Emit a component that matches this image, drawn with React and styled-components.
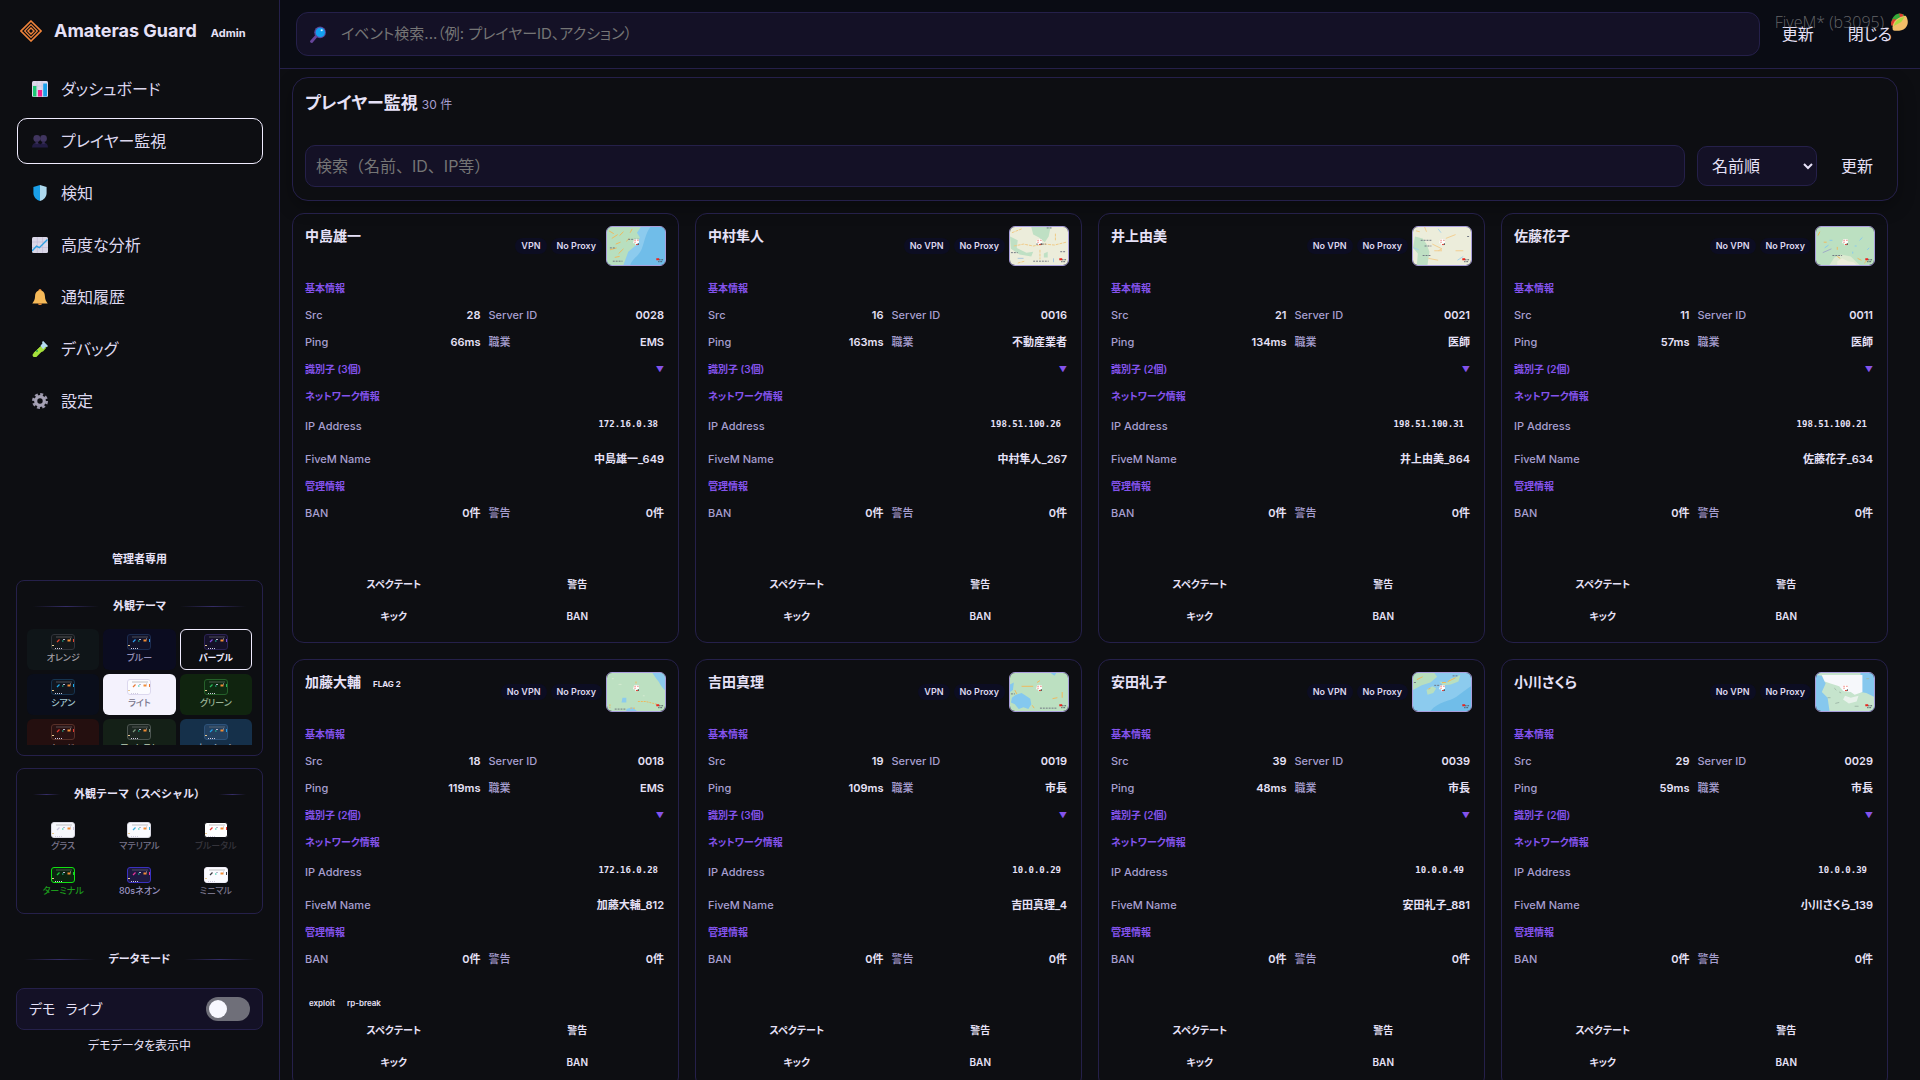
import styled, { createGlobalStyle } from "styled-components";

const GlobalStyle = createGlobalStyle`
  * {
    box-sizing: border-box;
  }
  body {
    margin: 0;
    background: #0d0e12;
    color: #e6e1f7;
    font-family: Inter, "Noto Sans CJK JP", sans-serif;
    font-size: 16px;
    line-height: 20px;
    font-feature-settings: "palt";
    overflow: hidden;
  }
  button, input, select {
    font: inherit;
    font-feature-settings: inherit;
    color: inherit;
  }
  button {
    background: none;
    border: 0;
    padding: 0;
    cursor: pointer;
  }
`;

const Layout = styled.div`
  display: flex;
  height: 100vh;
`;

const Sidebar = styled.aside`
  width: 280px;
  flex-shrink: 0;
  display: flex;
  flex-direction: column;
  padding: 0 16px 24px;
  border-right: 1px solid #25204a;
`;

const Brand = styled.div`
  display: flex;
  align-items: center;
  height: 62px;
  padding: 0 4px;
`;

const BrandName = styled.h1`
  margin: 0 14px 0 12px;
  font-size: 18px;
  font-weight: 700;
`;

const BrandRole = styled.span`
  font-size: 11px;
  font-weight: 700;
  padding-top: 4px;
`;

const Nav = styled.nav`
  display: flex;
  flex-direction: column;
  gap: 6px;
  padding: 4px 0 0 1px;
`;

const NavItem = styled.a`
  display: flex;
  align-items: center;
  gap: 13px;
  height: 46px;
  padding: 0 14px;
  border: 1px solid ${(props) => (props.$active ? "#f0ecff" : "transparent")};
  border-radius: 10px;
  color: #dcd7ee;
  text-decoration: none;
`;

const Bottom = styled.div`
  margin-top: auto;
`;

const AdminOnly = styled.h2`
  margin: 0 0 12px;
  text-align: center;
  font-size: 11px;
  font-weight: 700;
  line-height: 18px;
`;

const ThemeBox = styled.section`
  margin-bottom: 12px;
  padding: 16px 10px 10px;
  border: 1px solid #25204a;
  border-radius: 8px;
`;

const RuleTitle = styled.h3`
  display: flex;
  align-items: center;
  gap: 14px;
  margin: 0 6px 14px;
  font-size: 11px;
  font-weight: 700;
  line-height: 18px;
  font-feature-settings: ${(props) => (props.$fullWidth ? "normal" : "inherit")};

  &::before,
  &::after {
    content: "";
    flex: 1;
    height: 1px;
    background: linear-gradient(90deg, transparent, #352d68, transparent);
  }
`;

const ThemeGrid = styled.div`
  display: grid;
  grid-template-columns: repeat(3, 1fr);
  grid-auto-rows: 41px;
  gap: 4px;
  max-height: 116px;
  overflow: hidden;
`;

const ThemeButton = styled.button`
  display: flex;
  flex-direction: column;
  align-items: center;
  gap: 1px;
  padding-top: 4px;
  border: 1px solid ${(props) => (props.$active ? "#f0ecff" : "transparent")};
  border-radius: 6px;
  background: ${(props) => props.$bg || "none"};
  background-clip: border-box;
  color: ${(props) => props.$color};
  font-size: 9px;
  font-weight: ${(props) => (props.$active ? 700 : 500)};
  line-height: 14px;
`;

const ModeTitle = styled(RuleTitle)`
  margin: 36px 8px 20px;
`;

const ModeSwitch = styled.label`
  display: flex;
  align-items: center;
  gap: 10px;
  height: 42px;
  padding: 0 12px;
  border: 1px solid #25204a;
  border-radius: 8px;
  background: #141126;
  font-size: 14px;
`;

const Toggle = styled.input`
  appearance: none;
  width: 44px;
  height: 24px;
  margin: 0 0 0 auto;
  padding: 3px;
  border-radius: 12px;
  background: #6f6f79;
  cursor: pointer;

  &::before {
    content: "";
    display: block;
    width: 18px;
    height: 18px;
    border-radius: 50%;
    background: #f8f8ff;
  }
  &:checked::before {
    margin-left: auto;
  }
`;

const ModeNote = styled.p`
  margin: 6px 0 0;
  text-align: center;
  font-size: 12px;
`;

const Content = styled.div`
  flex: 1;
  min-width: 0;
  display: flex;
  flex-direction: column;
`;

const Topbar = styled.header`
  display: flex;
  align-items: center;
  gap: 10px;
  height: 69px;
  flex-shrink: 0;
  padding: 0 16px;
  border-bottom: 1px solid #25204a;
  background: #0a0c14;
`;

const SearchBox = styled.label`
  flex: 1;
  display: flex;
  align-items: center;
  gap: 14px;
  height: 44px;
  padding: 0 13px;
  border: 1px solid #25204a;
  border-radius: 12px;
  background: #141126;
`;

const SearchInput = styled.input`
  flex: 1;
  min-width: 0;
  padding: 0;
  border: 0;
  outline: 0;
  background: none;
  font-size: 15px;

  &::placeholder {
    color: #757575;
  }
`;

const TextButton = styled.button`
  height: 40px;
  padding: 0 12px;
  color: #e6e1f7;
  white-space: nowrap;
`;

const Main = styled.main`
  flex: 1;
  min-height: 0;
  overflow: hidden;
  padding: 8px 22px 0 12px;
`;

const Panel = styled.section`
  padding: 15px 12px 13px;
  border: 1px solid #25204a;
  border-radius: 16px;
  box-shadow: 0 6px 18px rgba(0, 0, 0, 0.3);
`;

const PanelTitle = styled.h2`
  margin: 0 0 30px;
  font-size: 17px;
  font-weight: 700;
`;

const Count = styled.span`
  margin-left: 4px;
  color: #a79fd0;
  font-size: 12px;
  font-weight: 400;
`;

const Filters = styled.div`
  display: flex;
  align-items: center;
  gap: 12px;
`;

const FilterInput = styled(SearchInput)`
  height: 42px;
  padding: 0 10px;
  border: 1px solid #25204a;
  border-radius: 10px;
  background: #141126;
  font-size: 16px;
  font-feature-settings: normal;
`;

const SortSelect = styled.select`
  width: 120px;
  height: 40px;
  padding: 0 10px;
  border: 1px solid #25204a;
  border-radius: 10px;
  background: #141126;
`;

const CardGrid = styled.div`
  display: grid;
  grid-template-columns: repeat(4, 1fr);
  gap: 16px;
  margin: 12px 10px 0 0;
`;

const Card = styled.article`
  padding: 12px;
  border: 1px solid #25204a;
  border-radius: 12px;
`;

const CardHead = styled.header`
  display: flex;
  align-items: center;
  gap: 4px;
  height: 40px;
  margin-bottom: 12px;
`;

const PlayerName = styled.h3`
  align-self: flex-start;
  margin: 0 auto 0 0;
  font-size: 14px;
  font-weight: 700;
  line-height: 20px;
`;

const Flag = styled.span`
  margin-left: 12px;
  font-size: 8px;
`;

const Pill = styled.span`
  padding: 0 6px;
  border-radius: 8px;
  background: #0c0d22;
  color: #dcd7ee;
  font-size: 9px;
  font-weight: 600;
  line-height: 16px;
`;

const MapThumb = styled.svg`
  width: 60px;
  height: 40px;
  border: 1px solid #a99edb;
  border-radius: 6px;
`;

const Info = styled.div`
  display: grid;
  grid-template-columns: 1fr 1fr;
  gap: 6px 8px;
  padding-right: 2px;
`;

const SectionTitle = styled.h4`
  grid-column: 1 / -1;
  margin: 0;
  color: #8453ec;
  font-size: 10px;
  font-weight: 600;
  line-height: 21px;
`;

const SectionToggle = styled.button`
  grid-column: 1 / -1;
  display: flex;
  justify-content: space-between;
  color: #8453ec;
  font-size: 10px;
  font-weight: 600;
  line-height: 21px;
`;

const Caret = styled.span`
  font-size: 8px;
`;

const Field = styled.div`
  grid-column: ${(props) => (props.$wide ? "1 / -1" : "auto")};
  display: flex;
  justify-content: space-between;
  font-size: 11px;
  line-height: 21px;
`;

const AddressField = styled(Field)`
  align-items: center;
  height: 30px;
  padding-bottom: 3px;
`;

const FieldName = styled.span`
  color: #a79fd0;
  font-weight: 500;
`;

const FieldValue = styled.span`
  font-weight: 600;
`;

const Address = styled.code`
  padding: 0 6px 4px;
  font-family: "DejaVu Sans Mono", monospace;
  font-size: 9px;
  font-weight: 700;
`;

const Tags = styled.div`
  display: flex;
  gap: 12px;
  height: 18px;
  margin: 24px 0 4px;
  padding: 0 4px;
  font-size: 8px;
  font-weight: 600;
  line-height: 18px;
`;

const Actions = styled.div`
  display: grid;
  grid-template-columns: 1fr 1fr;
  gap: 4px 6px;
`;

const ActionButton = styled.button`
  height: 28px;
  font-size: 10px;
  font-weight: 600;
`;

// build label of the game client, drawn over everything
const Watermark = styled.div`
  position: absolute;
  top: 12px;
  right: 12px;
  display: flex;
  align-items: center;
  gap: 6px;
  color: rgba(160, 160, 160, 0.6);
  font-family: "Open Sans", sans-serif;
  font-weight: 300;
  pointer-events: none;
`;

const icons = {
  chart: (
    <>
      <rect width="16" height="16" rx="1.5" fill="#dcd8ea" />
      <path d="M0 5h16M0 10h16M5 0v16M10 0v16" stroke="#c3bcd8" strokeWidth="0.5" />
      <path d="M1 5h3.4v10.5H1z" fill="#1bc873" />
      <path d="M6 9h4v6.5H6z" fill="#f3228c" />
      <path d="M11.2 2.500h3.800v13h-3.800z" fill="#1aa0ea" />
    </>
  ),
  people: (
    <>
      <circle cx="4.800" cy="5.500" r="3.400" fill="#40355f" />
      <circle cx="11.500" cy="5.500" r="3.400" fill="#40355f" />
      <path d="M0 14.500c0-3 1.800-4.700 4.500-4.700s3.500 1 3.700 2c.3-1 1.300-2 3.500-2 2.700 0 4.300 1.700 4.300 4.700z" fill="#221c42" />
      <path d="M3.500 8h2.600v3H3.500zM10.200 8h2.600v3h-2.600z" fill="#352b55" />
    </>
  ),
  shield: (
    <>
      <path d="M8 0L1.400 2v6c0 4 3 7 6.600 8z" fill="#1a9fe8" />
      <path d="M8 0l6.600 2v6c0 4-3 7-6.600 8z" fill="#add9ee" />
    </>
  ),
  trend: (
    <>
      <rect width="16" height="16" rx="1.500" fill="#dad7e8" />
      <path d="M0 5h16M0 10.500h16M5.300 0v16M10.600 0v16" stroke="#bdb7d2" strokeWidth="0.600" />
      <path d="M0 14l4.500-4.800 2.800 1.500L15.500 2.500" fill="none" stroke="#2b9fe0" strokeWidth="1.400" />
    </>
  ),
  bell: (
    <>
      <circle cx="8" cy="1.500" r="1.500" fill="#ee8b35" />
      <path d="M8 1.500c-3.500 0-4.800 2.600-4.900 5.500C3 10.500 2 12 .3 14.500h15.400C14 12 13 10.500 12.900 7 12.800 4.100 11.500 1.500 8 1.500z" fill="#f5b958" />
      <path d="M6 14.500h4a2 1.500 0 0 1-4 0z" fill="#ee8b35" />
    </>
  ),
  tube: (
    <>
      <path d="M3 14.200L11.500 5.700" stroke="#a5e03b" strokeWidth="4.600" strokeLinecap="round" />
      <path d="M1.500 12l6.500-6 6.500.5-3.500 4z" fill="#a5e03b" />
      <path d="M8.500 4.800l2-2.500L10 1l1.200-1L16 5l-1 1-1.500-.3-2.400 2.500z" fill="#b5dcf0" />
      <circle cx="5" cy="10" r="1" fill="#2da34a" />
    </>
  ),
  gear: (
    <>
      <circle cx="8" cy="8" r="6.600" fill="none" stroke="#9c98ac" strokeWidth="2.800" strokeDasharray="2.900 2.280" />
      <circle cx="8" cy="8" r="4.300" fill="none" stroke="#a5a1b4" strokeWidth="3.200" />
    </>
  ),
  magnifier: (
    <>
      <path d="M1.500 14.500l4-4.500" stroke="#67459a" strokeWidth="2.800" strokeLinecap="round" />
      <circle cx="9.500" cy="6" r="5.500" fill="#5a4a9c" />
      <circle cx="9.700" cy="6" r="4.400" fill="#12a0ef" />
      <circle cx="11" cy="4" r="1" fill="#d9f2ff" />
    </>
  ),
  taco: (
    <>
      <path d="M1 10C1 5 4 1 8 .5l4 .5 1.500 2L5 13z" fill="#36a838" />
      <path d="M1 8l2-3 2.500 1L3.500 11H1zM8 .5l3 .3L12.500 3 9 3.500z" fill="#e03b30" />
      <path d="M2.500 15C1 9 6.500 3 14 2.500 16.500 6 16.500 11 13.500 13.500c-3 2.500-8.500 3-11 1.500z" fill="#f4be69" />
      <path d="M3.500 11.500C4 8 8 4 13 3.500L10 8z" fill="#a7dc40" />
    </>
  ),
};

const Icon = ({ name, size = 16 }) => (
  <svg width={size} height={size} viewBox="0 0 16 16" aria-hidden="true">
    {icons[name]}
  </svg>
);

const Logo = () => (
  <svg width="22" height="22" viewBox="0 0 22 22" fill="none" stroke="#f0843a" aria-hidden="true">
    <path d="M11 1l10 10-10 10L1 11z" strokeWidth="1.600" />
    <path d="M11 4.700l6.300 6.300-6.300 6.300L4.700 11z" strokeWidth="1.200" />
    <path d="M11 8l3 3-3 3-3-3z" strokeWidth="1.400" />
  </svg>
);

const ThemePreview = ({ bg, line, accent }) => (
  <svg width="24" height="16" viewBox="0 0 24 16" aria-hidden="true">
    <rect x="0.500" y="0.500" width="23" height="15" rx="2.500" fill={bg} stroke={line} />
    <path d="M5 3h16" stroke="#888" strokeOpacity="0.250" strokeWidth="2" />
    <path d="M6 8l2.500-2.500" stroke={accent} strokeWidth="1.200" />
    <path d="M11 7h1.500" stroke="#1fc7a0" />
    <path d="M12 5.500h2M19 5h1" stroke="#b9b4cc" />
    <path d="M16.500 6.500h3" stroke="#f08c35" strokeWidth="2" />
    <path d="M22.500 5v3" stroke={accent} />
    <path d="M1 11.500h2" stroke="#e8c890" />
    <path d="M4 14.500h7" stroke="#cfcadf" strokeDasharray="1 1" />
  </svg>
);

const Pin = () => (
  <g>
    <path d="M28 13h5v4h-2l-1 3-1-3h-2z" fill="#fff" />
    <path d="M28.500 14h1M31.500 14h1M28.500 16h1M30 18.500h2" stroke="#e1342c" />
    <path d="M32 17h1v2h-1z" fill="#555" />
    <path d="M51 34h3" stroke="#e8241e" strokeWidth="2" />
    <path d="M54 34.500h4M53 36.500h4" stroke="#444a58" strokeDasharray="1 0.500" />
  </g>
);

const maps = {
  coast: (
    <>
      <rect width="60" height="40" fill="#8ccbee" />
      <path d="M45 0h15v40H24c3-8 9-9 12-17S40 6 45 0z" fill="#70bde9" />
      <path d="M0 0h35l-4 6 3 5-5 9-7 6-5 14H0z" fill="#b8dfbf" />
      <path d="M2 4l5 3M5 12l6-4M9 18l5-2M13 9l4-4M3 24l7-2M12 28l5-5M20 15l3-3M8 32l5-1M24 6l2-4" stroke="#f0b75b" />
      <path d="M22 13h12M3 22h6M6 36h10" stroke="#6f7480" strokeDasharray="2 1" />
    </>
  ),
  plain: (
    <>
      <rect width="60" height="40" fill="#eceddb" />
      <path d="M22 0h20l-2 10-4 6-6-5-6-3zM0 10l8 4-1 8 10 5 7-1-2 5-12-2-9-6zM35 28l4-2v6h-4z" fill="#bfe0c4" />
      <path d="M4 20l10-2 10 2 12-2 10 1 12-3M31 24v10M2 6l10-4M8 38l7-2M47 7v8" fill="none" stroke="#f0c983" strokeDasharray="3 1" />
      <path d="M24 36h16M1 27h7M52 26h6M38 1h6M27 18h10" stroke="#6f7480" strokeDasharray="2 1" />
      <path d="M8 33h6M45 33v4" stroke="#a5c4de" />
    </>
  ),
  west: (
    <>
      <rect width="60" height="40" fill="#eceddb" />
      <path d="M2 10l8 2 4 6 3 8-2 14H4l1-12-5-6z" fill="#bfe0c4" />
      <path d="M12 0l2 5M20 18l10 5-4 2M22 25h8M34 12l10-4M16 33l10 2M44 25h8M3 4l4 1" fill="none" stroke="#f2cd8e" />
      <path d="M8 14h12M12 20h7M10 30h9M56 10h3" stroke="#6f7480" strokeDasharray="2 1" />
      <path d="M1 22l5 2M46 35l6-4M26 2l3 4" stroke="#a5d2ea" />
    </>
  ),
  hills: (
    <>
      <rect width="60" height="40" fill="#bce0c1" />
      <path d="M14 40l5-8 7-3 10 2 9 9z" fill="#dce9d0" />
      <path d="M22 40v-4l5-3 6 3 6 1 3 3z" fill="#eceddb" />
      <path d="M2 9l2-4M8 16h3M22 31l3 2M50 38l3-3M43 33l4 2M22 24v-3" stroke="#f0b75b" />
      <path d="M40 20h2M45 14l3-3M38 26v2M53 24l2-2M14 14h3M9 22l4-3" stroke="#86c8ef" />
      <path d="M17 30h10" stroke="#6f7480" strokeDasharray="2 1" />
      <path d="M7 27l9-4" stroke="#9fa9c5" />
    </>
  ),
  lakes: (
    <>
      <rect width="60" height="40" fill="#bce0c1" />
      <path d="M47 0h13v18c-4-3-6-9-9-12zM16 26h4v5h-5zM20 40v-2l6-2 5 4z" fill="#8ccbee" />
      <path d="M32 30h8l12 3M24 37h5M3 33v4M30 9v2" fill="none" stroke="#f0b75b" strokeDasharray="2 1" />
      <path d="M8 38h12" stroke="#6f7480" strokeDasharray="2 1" />
      <path d="M5 6h2M12 12h3M37 24h2" stroke="#d6ead2" />
    </>
  ),
  bay: (
    <>
      <rect width="60" height="40" fill="#bce0c1" />
      <path d="M0 12l4-2-1 8-3 2zM2 26l4-3 6-2 6 4 3 2 1 6-3 5-5-2-5 2-4-5-4-2zM42 0h6l-2 3z" fill="#84c8ef" />
      <path d="M12 14h12M28 10l3-2M54 20v6M44 27l5-1M23 34l2 3M5 18l2 4" stroke="#f0b75b" />
      <path d="M31 37h18M1 22h4" stroke="#6f7480" strokeDasharray="2 1" />
    </>
  ),
  cape: (
    <>
      <rect width="60" height="40" fill="#8ccbee" />
      <path d="M60 14v26H18c8-10 20-10 27-15S54 18 60 14z" fill="#70bde9" />
      <path d="M0 0h22l3 4-7 6-9 3-9 5zM14 18l6-4 4 2-3 5-6 2zM27 9l8 1 4-4 6-2 4-2-2 7-8 3-8 1z" fill="#b8dfbf" />
      <path d="M4 7l6-3M16 17l2-1M30 10h4M36 9l8-4" stroke="#f0b75b" />
      <path d="M22 13h9M1 10h3M41 3h6" stroke="#6f7480" strokeDasharray="2 1" />
    </>
  ),
  island: (
    <>
      <rect width="60" height="40" fill="#86c8ee" />
      <path d="M0 2l6 1 4 8-4 9 6 6 2 14h46V25l-8-4-6-1V0H4z" fill="#c6e4cd" />
      <path d="M6 2h42v18l-8 3-4-3-8-1-4-5-9-3-6-2z" fill="#f6f8fb" />
      <path d="M30 24l6 2 8-2-2 6-8 2-6-4z" fill="#e9f2ec" />
      <path d="M19 16l2 2M24 20l2 1M12 26h3M20 32l4-1M40 35h4M52 6h3" stroke="#9fb8a8" />
    </>
  ),
};

const navItems = [
  { icon: "chart", label: "ダッシュボード" },
  { icon: "people", label: "プレイヤー監視", active: true },
  { icon: "shield", label: "検知" },
  { icon: "trend", label: "高度な分析" },
  { icon: "bell", label: "通知履歴" },
  { icon: "tube", label: "デバッグ" },
  { icon: "gear", label: "設定" },
];

const themes = [
  { name: "オレンジ", tile: "#0f1518", color: "#a19fa5", bg: "#14181b", line: "#30343a", accent: "#e5442e" },
  { name: "ブルー", tile: "#0b0c20", color: "#9490b8", bg: "#11132a", line: "#1b2c50", accent: "#2a9df0" },
  { name: "パープル", tile: "", color: "#f0ecff", bg: "#151129", line: "#2c2354", accent: "#7a4ad8", active: true },
  { name: "シアン", tile: "#0a0e1b", color: "#a3c6cf", bg: "#101620", line: "#16344f", accent: "#1fa9e8" },
  { name: "ライト", tile: "#f4f2fd", color: "#77738a", bg: "#fbfbff", line: "#dcd8ee", accent: "#e87b35" },
  { name: "グリーン", tile: "#10240f", color: "#9bb496", bg: "#0f2b12", line: "#25602a", accent: "#27b859" },
  { name: "レッド", tile: "#240f0f", color: "#a58b85", bg: "#2a1213", line: "#573029", accent: "#e3382f" },
  { name: "フォレスト", tile: "#142017", color: "#a1b59e", bg: "#1d2722", line: "#4c5551", accent: "#7d9a80" },
  { name: "オーシャン", tile: "#15304a", color: "#a6bfd2", bg: "#23405f", line: "#2d527a", accent: "#209ce8" },
];

const specialThemes = [
  { name: "グラス", color: "#777389", bg: "#f6f7fc", line: "#d9d8e2", accent: "#c9c4dd" },
  { name: "マテリアル", color: "#777389", bg: "#fafaff", line: "#d9d8e2", accent: "#3bb0e0" },
  { name: "ブルータル", color: "#35343b", bg: "#ffffff", line: "#0d0e12", accent: "#e5342e" },
  { name: "ターミナル", color: "#1c9a1c", bg: "#0c2410", line: "#12e012", accent: "#19c836" },
  { name: "80sネオン", color: "#9c95c4", bg: "#1e1a42", line: "#3a31c0", accent: "#e8349a" },
  { name: "ミニマル", color: "#777389", bg: "#fbfbff", line: "#efedf7", accent: "#3c3c44" },
];

const players = [
  { name: "中島雄一", vpn: true, map: "coast", src: 28, ping: 66, job: "EMS", ids: 3, ip: "172.16.0.38", suffix: 649 },
  { name: "中村隼人", map: "plain", src: 16, ping: 163, job: "不動産業者", ids: 3, ip: "198.51.100.26", suffix: 267 },
  { name: "井上由美", map: "west", src: 21, ping: 134, job: "医師", ids: 2, ip: "198.51.100.31", suffix: 864 },
  { name: "佐藤花子", map: "hills", src: 11, ping: 57, job: "医師", ids: 2, ip: "198.51.100.21", suffix: 634 },
  { name: "加藤大輔", map: "lakes", src: 18, ping: 119, job: "EMS", ids: 2, ip: "172.16.0.28", suffix: 812, flag: 2, tags: ["exploit", "rp-break"] },
  { name: "吉田真理", vpn: true, map: "bay", src: 19, ping: 109, job: "市長", ids: 3, ip: "10.0.0.29", suffix: 4 },
  { name: "安田礼子", map: "cape", src: 39, ping: 48, job: "市長", ids: 2, ip: "10.0.0.49", suffix: 881 },
  { name: "小川さくら", map: "island", src: 29, ping: 59, job: "市長", ids: 2, ip: "10.0.0.39", suffix: 139 },
];

const Item = ({ label, value, wide }) => (
  <Field $wide={wide}>
    <FieldName>{label}</FieldName>
    <FieldValue>{value}</FieldValue>
  </Field>
);

const ThemeList = ({ items }) => (
  <ThemeGrid>
    {items.map((t) => (
      <ThemeButton key={t.name} type="button" $bg={t.tile} $color={t.color} $active={t.active}>
        <ThemePreview bg={t.bg} line={t.line} accent={t.accent} />
        {t.name}
      </ThemeButton>
    ))}
  </ThemeGrid>
);

const PlayerCard = ({ player }) => (
  <Card>
    <CardHead>
      <PlayerName>
        {player.name}
        {player.flag && <Flag>FLAG {player.flag}</Flag>}
      </PlayerName>
      <Pill>{player.vpn ? "VPN" : "No VPN"}</Pill>
      <Pill>No Proxy</Pill>
      <MapThumb viewBox="0 0 60 40" preserveAspectRatio="none" aria-hidden="true">
        {maps[player.map]}
        <Pin />
      </MapThumb>
    </CardHead>
    <Info>
      <SectionTitle>基本情報</SectionTitle>
      <Item label="Src" value={player.src} />
      <Item label="Server ID" value={`00${player.src}`} />
      <Item label="Ping" value={`${player.ping}ms`} />
      <Item label="職業" value={player.job} />
      <SectionToggle type="button">
        <span>識別子 ({player.ids}個)</span>
        <Caret>▼</Caret>
      </SectionToggle>
      <SectionTitle>ネットワーク情報</SectionTitle>
      <AddressField $wide>
        <FieldName>IP Address</FieldName>
        <Address>{player.ip}</Address>
      </AddressField>
      <Item wide label="FiveM Name" value={`${player.name}_${player.suffix}`} />
      <SectionTitle>管理情報</SectionTitle>
      <Item label="BAN" value="0件" />
      <Item label="警告" value="0件" />
    </Info>
    <Tags>
      {(player.tags || []).map((tag) => (
        <span key={tag}>{tag}</span>
      ))}
    </Tags>
    <Actions>
      <ActionButton type="button">スペクテート</ActionButton>
      <ActionButton type="button">警告</ActionButton>
      <ActionButton type="button">キック</ActionButton>
      <ActionButton type="button">BAN</ActionButton>
    </Actions>
  </Card>
);

const App = () => {
  return (
    <>
      <GlobalStyle />
      <Layout>
        <Sidebar>
          <Brand>
            <Logo />
            <BrandName>Amateras Guard</BrandName>
            <BrandRole>Admin</BrandRole>
          </Brand>
          <Nav>
            {navItems.map((item) => (
              <NavItem key={item.label} href="#" $active={item.active}>
                <Icon name={item.icon} />
                {item.label}
              </NavItem>
            ))}
          </Nav>
          <Bottom>
            <AdminOnly>管理者専用</AdminOnly>
            <ThemeBox>
              <RuleTitle>外観テーマ</RuleTitle>
              <ThemeList items={themes} />
            </ThemeBox>
            <ThemeBox>
              <RuleTitle $fullWidth>外観テーマ（スペシャル）</RuleTitle>
              <ThemeList items={specialThemes} />
            </ThemeBox>
            <ModeTitle>データモード</ModeTitle>
            <ModeSwitch>
              <span>デモ</span>
              <span>ライブ</span>
              <Toggle type="checkbox" />
            </ModeSwitch>
            <ModeNote>デモデータを表示中</ModeNote>
          </Bottom>
        </Sidebar>
        <Content>
          <Topbar>
            <SearchBox>
              <Icon name="magnifier" size={17} />
              <SearchInput
                type="search"
                aria-label="イベント検索"
                placeholder="イベント検索...（例: プレイヤーID、アクション）"
              />
            </SearchBox>
            <TextButton type="button">更新</TextButton>
            <TextButton type="button">閉じる</TextButton>
          </Topbar>
          <Main>
            <Panel>
              <PanelTitle>
                プレイヤー監視
                <Count>30 件</Count>
              </PanelTitle>
              <Filters>
                <FilterInput
                  type="search"
                  aria-label="プレイヤー検索"
                  placeholder="検索（名前、ID、IP等）"
                />
                <SortSelect aria-label="並び順">
                  <option>名前順</option>
                </SortSelect>
                <TextButton type="button">更新</TextButton>
              </Filters>
            </Panel>
            <CardGrid>
              {players.map((player) => (
                <PlayerCard key={player.name} player={player} />
              ))}
            </CardGrid>
          </Main>
        </Content>
      </Layout>
      <Watermark>
        FiveM* (b3095)
        <Icon name="taco" size={18} />
      </Watermark>
    </>
  );
};

export default App;
